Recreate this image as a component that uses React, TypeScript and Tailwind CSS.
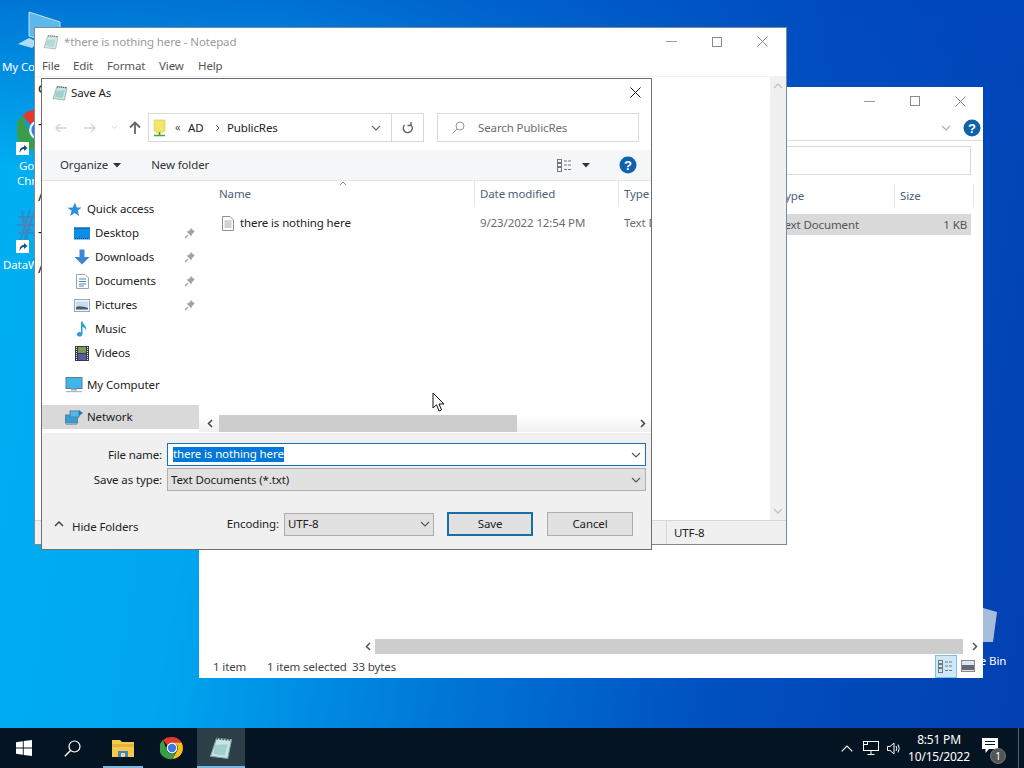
import React from "react";

const Pad = ({ s = 16 }: { s?: number }) => (
  <svg width={s} height={s} viewBox="0 0 16 16">
    <path d="M5 1.5 L15 2.5 L12.5 15 L1 13.5 Z" fill="#c6e6e2" stroke="#7f9f9f" strokeWidth="0.7" />
    <path d="M4 6 L12.5 5.5 L10.5 13 L3 12 Z" fill="#8fc6c4" opacity="0.7" />
    <path d="M5 1.8 L15 2.8" stroke="#556" strokeWidth="1.2" strokeDasharray="1 1" />
  </svg>
);
const Pin = () => (
  <svg width="12" height="12" viewBox="0 0 12 12">
    <path d="M7 1 L11 5 L9.5 5.5 L7.5 8 L7.5 9.5 L2.5 4.5 L4 4.5 L6.5 2.5 Z" fill="#a3a3a3" />
    <path d="M4 8 L1 11" stroke="#a3a3a3" strokeWidth="1.2" />
  </svg>
);
const Help = ({ s = 18 }: { s?: number }) => (
  <svg width={s} height={s} viewBox="0 0 18 18">
    <circle cx="9" cy="9" r="8.5" fill="#0f62ae" />
    <text x="9" y="13.5" textAnchor="middle" fontSize="13" fontWeight="700" fontFamily="Liberation Sans, sans-serif" fill="#fff">?</text>
  </svg>
);
const Chev = ({ c = "#555", w = 10 }: { c?: string; w?: number }) => (
  <svg width={w} height="6" viewBox="0 0 10 6"><path d="M1 1 L5 5 L9 1" fill="none" stroke={c} strokeWidth="1.1" /></svg>
);
const Caret = () => (
  <svg width="8" height="5" viewBox="0 0 8 5"><path d="M0 0 H8 L4 4.5 Z" fill="#333" /></svg>
);
const WinCtl = () => (
  <div className="flex h-full">
    <div className="w-[45px] flex items-center justify-center"><div className="w-[11px] h-px bg-[#9a9a9a] mr-[2px]" /></div>
    <div className="w-[45px] flex items-center justify-center"><div className="w-[10px] h-[10px] border border-[#8a8a8a] mr-[2px]" /></div>
    <div className="w-[45px] flex items-center justify-center">
      <svg width="11" height="11" viewBox="0 0 11 11"><path d="M0.5 0.5 L10.5 10.5 M10.5 0.5 L0.5 10.5" stroke="#8a8a8a" /></svg>
    </div>
  </div>
);
const ViewIcon = () => (
  <svg width="16" height="13" viewBox="0 0 16 13" fill="none" stroke="#777">
    <rect x="0.5" y="0.5" width="4" height="3" /><rect x="0.5" y="4.5" width="4" height="3" /><rect x="0.5" y="8.5" width="4" height="4" />
    <path d="M7 2 H15 M7 6 H15 M7 10.5 H15" strokeDasharray="3 1" />
  </svg>
);

const StarI = () => (
  <svg width="15" height="15" viewBox="0 0 15 15"><path d="M8 0.5 L9.8 5.5 L14.5 5.5 L10.8 8.8 L12.2 14 L7.6 11 L3 14 L4.7 8.8 L0.5 5.8 L5.7 5.5 Z" fill="#2f8fd8" /></svg>
);
const DesktopI = () => (
  <svg width="16" height="13" viewBox="0 0 16 13"><rect x="0" y="0.5" width="16" height="12" fill="#0f8ce6" /><rect x="0" y="0.5" width="16" height="1.5" fill="#0b6bb5" /><path d="M1 11.5 H15" stroke="#0a3d70" strokeDasharray="1 1" /></svg>
);
const DownI = () => (
  <svg width="16" height="16" viewBox="0 0 16 16"><path d="M5.5 0.5 H10.5 V8 H15.5 L8 15.5 L0.5 8 H5.5 Z" fill="#3b87d6" /></svg>
);
const DocsI = () => (
  <svg width="13" height="15" viewBox="0 0 13 15"><path d="M0.5 0.5 H9 L12.5 4 V14.5 H0.5 Z" fill="#fff" stroke="#9aa4ae" /><path d="M3 5 H10 M3 7.5 H10 M3 10 H10 M3 12 H8" stroke="#4a8ab8" /></svg>
);
const PicsI = () => (
  <svg width="16" height="13" viewBox="0 0 16 13"><rect x="0.5" y="0.5" width="15" height="12" fill="#f3f6fa" stroke="#98a6b8" /><rect x="2" y="2.5" width="12" height="8" fill="#c8dcee" /><path d="M2 10.5 L2 8 C6 6.5 10 8 14 9 V10.5 Z" fill="#4a5a68" /></svg>
);
const MusicI = () => (
  <svg width="12" height="16" viewBox="0 0 12 16"><path d="M5 0.5 H6.5 C7 4 11.5 5 10 10 C9.8 7.5 8.5 6.5 6.5 6 V13 C6.5 15 4.5 15.8 2.8 15.5 C0.5 15 0.3 12.5 2 11.6 C3 11 4.2 11 5 11.4 Z" fill="#2a9fdc" /></svg>
);
const VideoI = () => (
  <svg width="14" height="15" viewBox="0 0 14 15"><rect width="14" height="15" fill="#3a3a3a" /><rect x="3" y="1" width="8" height="6" fill="#7a9a5a" /><rect x="3" y="8" width="8" height="6" fill="#4d5fa0" /><path d="M1.5 1 V14 M12.5 1 V14" stroke="#eee" strokeDasharray="1 1" /></svg>
);
const PcI = () => (
  <svg width="18" height="16" viewBox="0 0 18 16"><rect x="1" y="0.5" width="16" height="11" fill="#3fb6ea" stroke="#5a7f96" /><rect x="6" y="11.5" width="6" height="2" fill="#9ab" /><rect x="1" y="14" width="16" height="1.2" fill="#aab7c2" /></svg>
);
const NetI = () => (
  <svg width="18" height="16" viewBox="0 0 18 16"><rect x="0.5" y="6" width="12" height="8" fill="#2f9fdc" stroke="#5a7f96" /><rect x="5" y="2" width="9" height="6" fill="#53b9ea" stroke="#5a7f96" /><path d="M14 1 L18 4 L14 7 Z" fill="#1f7fc0" /><path d="M1 15.4 H12" stroke="#8fa0ad" /></svg>
);

const Side = ({ icon, label, indent, pin, active }: { icon: React.ReactNode; label: string; indent?: boolean; pin?: boolean; active?: boolean }) => (
  <div className={`h-6 flex items-center ${active ? "bg-[#d9d9d9]" : ""}`}>
    <div className={`flex items-center justify-center shrink-0 h-full ${indent ? "ml-[32px] w-[16px]" : "ml-[23px] w-[18px]"}`}>{icon}</div>
    <span className={`${indent ? "ml-[5px]" : "ml-[4px]"} flex-1 text-[#222]`}>{label}</span>
    {pin && <span className="mr-[3px] w-[12px] flex"><Pin /></span>}
    {!pin && <span className="mr-[3px]" />}
  </div>
);

const DeskLabel = ({ children, cls }: { children: React.ReactNode; cls: string }) => (
  <div className={`absolute text-white whitespace-nowrap ${cls}`}>{children}</div>
);
const Shortcut = ({ cls }: { cls: string }) => (
  <svg className={`absolute ${cls}`} width="13" height="13" viewBox="0 0 13 13"><rect width="13" height="13" fill="#fff" /><path d="M3.5 11 C3.5 6.5 5.5 5 8 5 V3 L11.5 6 L8 9 V7 C6 7 5 8.5 3.5 11 Z" fill="#1a4f8f" /></svg>
);

const ChromeI = ({ s = 24 }: { s?: number }) => (
  <svg width={s} height={s} viewBox="0 0 24 24">
    <path d="M12 1 A11 11 0 0 1 21.5 6.5 L12 6.5 A5.5 5.5 0 0 0 7.2 9.2 L3 4 A11 11 0 0 1 12 1 Z" fill="#e5372b" />
    <path d="M21.5 6.5 A11 11 0 0 1 12.5 23 L17 14.8 A5.5 5.5 0 0 0 17 9 L12 6.5 Z" fill="#f9c01b" />
    <path d="M3 4 A11 11 0 0 0 12.5 23 L17 14.8 A5.5 5.5 0 0 1 7.2 14.8 Z" fill="#3b9d47" />
    <circle cx="12" cy="12" r="5.4" fill="#fff" /><circle cx="12" cy="12" r="4.2" fill="#3f78e0" />
  </svg>
);

export default function App() {
  return (
    <div
      className="relative w-[1024px] h-[768px] overflow-hidden text-[11.5px] tracking-[-0.12px] text-[#222] bg-[linear-gradient(to_bottom,rgba(0,70,190,0.55),rgba(0,70,190,0)_22%),linear-gradient(100deg,#00b0f2_0%,#00a6f0_24%,#0078d8_48%,#0050c0_72%,#0340b2_100%)]"
      style={{ fontFamily: '"Noto Sans", sans-serif' }}
    >
      {/* desktop icons */}
      <svg className="absolute left-[18px] top-[10px]" width="44" height="44" viewBox="0 0 44 44">
        <path d="M11 2 L42 12 V36 L11 26 Z" fill="#5fb8ea" stroke="#bfe3f7" />
        <path d="M0 34 L11 28 L20 32 L14 38 Z" fill="#cfeafa" opacity="0.85" />
      </svg>
      <DeskLabel cls="left-[2px] top-[58px]">My Computer</DeskLabel>
      <div className="absolute left-[17px] top-[108px] w-[44px] h-[44px]"><ChromeI s={44} /></div>
      <Shortcut cls="left-[16px] top-[142px]" />
      <DeskLabel cls="left-[19px] top-[157px]">Google</DeskLabel>
      <DeskLabel cls="left-[17px] top-[172px]">Chrome</DeskLabel>
      <svg className="absolute left-[16px] top-[207px] opacity-60" width="20" height="40" viewBox="0 0 20 40">
        <path d="M2 10 H20 M0 18 H20 M2 26 H20 M6 4 L12 36 M14 2 L4 34 M18 6 L8 34" stroke="#5d6f9f" strokeWidth="1.6" />
        <path d="M4 12 L16 24 M16 10 L6 26" stroke="#a85f7f" strokeWidth="1.4" />
      </svg>
      <Shortcut cls="left-[16px] top-[240px]" />
      <DeskLabel cls="left-[3px] top-[256px]">DataWedge</DeskLabel>

      <svg className="absolute left-[983px] top-[606px]" width="14" height="40" viewBox="0 0 14 40">
        <path d="M0 2 L14 6 L10 36 H0 Z" fill="#b9cbdc" opacity="0.9" />
      </svg>
      <DeskLabel cls="left-[947px] top-[652px]">Recycle Bin</DeskLabel>

      {/* Explorer window */}
      <div className="absolute left-[199px] top-[87px] w-[784px] h-[591px] bg-white flex flex-col text-[#555]">
        <div className="h-[28px] flex justify-end shrink-0"><WinCtl /></div>
        <div className="h-[26px] flex items-center justify-end border-b border-[#dcdcdc] shrink-0">
          <span className="mr-[12px] flex"><Chev c="#aaa" /></span>
          <span className="mr-[2px] flex"><Help /></span>
        </div>
        <div className="h-[29px] mt-[5px] ml-[12px] mr-[12px] border border-[#d9d9d9] shrink-0" />
        <div className="h-[23px] mt-[9px] flex shrink-0 text-[#4c607a]">
          <span className="w-[580px]" />
          <span className="w-[115px] leading-[23px]">Type</span>
          <span className="w-[80px] border-l border-[#e5e5e5] pl-[5px] border-r leading-[23px]">Size</span>
        </div>
        <div className="h-[21px] mt-[7px] ml-[12px] mr-[12px] bg-[#d9d9d9] flex items-center shrink-0 text-[#555]">
          <span className="w-[568px]" />
          <span className="flex-1">Text Document</span>
          <span className="mr-[4px]">1 KB</span>
        </div>
        <div className="flex-1" />
        <div className="h-[15px] flex items-center shrink-0">
          <span className="w-[166px]" />
          <svg className="mr-[4px]" width="6" height="9" viewBox="0 0 6 9"><path d="M5 1 L1.5 4.5 L5 8" fill="none" stroke="#555" strokeWidth="1.5" /></svg>
          <div className="w-[588px] h-full bg-[#cdcdcd]" />
          <svg className="ml-[9px]" width="6" height="9" viewBox="0 0 6 9"><path d="M1 1 L4.5 4.5 L1 8" fill="none" stroke="#555" strokeWidth="1.5" /></svg>
        </div>
        <div className="h-[24px] flex items-center shrink-0 text-[#444] whitespace-nowrap">
          <span className="ml-[14px] w-[54px] shrink-0 pt-[1px]">1 item</span>
          <span className="w-[85px] shrink-0 pt-[1px]">1 item selected</span>
          <span className="flex-1 pt-[1px]">33 bytes</span>
          <div className="w-[22px] h-[23px] bg-[#cde8f8] border border-[#7fc0e4] flex items-center justify-center"><ViewIcon /></div>
          <div className="w-[14px] h-[12px] ml-[4px] mr-[8px] border border-[#888] bg-[#dce8f0]"><div className="mt-[4px] h-[5px] bg-[#667]" /></div>
        </div>
      </div>

      {/* Notepad window */}
      <div className="absolute left-[34px] top-[27px] w-[753px] h-[518px] bg-white border border-[#7a8a96] flex flex-col">
        <div className="h-[27px] flex items-center shrink-0">
          <span className="ml-[8px] flex opacity-80"><Pad /></span>
          <span className="ml-[5px] flex-1 text-[#9b9b9b]">*there is nothing here - Notepad</span>
          <span className="mr-[1px] h-full"><WinCtl /></span>
        </div>
        <div className="h-[21px] flex items-center shrink-0 text-[#555]">
          <span className="ml-[7px] w-[31px]">File</span>
          <span className="w-[34px]">Edit</span>
          <span className="w-[52px]">Format</span>
          <span className="w-[39px]">View</span>
          <span>Help</span>
        </div>
        <div className="flex-1 flex min-h-0 border-t border-[#f0f0f0]">
          <div className="flex-1 flex flex-col pl-[3px] text-[14px] leading-[36px] text-[#111] overflow-hidden">
            <span className="-mt-[7px]">c</span><span>-</span><span className="invisible">x</span><span>/</span><span>-</span><span>/</span>
          </div>
          <div className="w-[16px] bg-[#f0f0f0] flex flex-col items-center justify-between py-[6px]">
            <svg width="10" height="6" viewBox="0 0 10 6"><path d="M1 5 L5 1 L9 5" fill="none" stroke="#c4c4c4" strokeWidth="1.4" /></svg>
            <svg width="10" height="6" viewBox="0 0 10 6"><path d="M1 1 L5 5 L9 1" fill="none" stroke="#c4c4c4" strokeWidth="1.4" /></svg>
          </div>
        </div>
        <div className="h-[24px] bg-[#f0f0f0] border-t border-[#d7d7d7] flex items-center shrink-0">
          <span className="w-[631px]" />
          <span className="h-full border-l border-[#d7d7d7] pl-[7px] leading-[23px] text-[#222]">UTF-8</span>
        </div>
      </div>

      {/* Save As dialog */}
      <div className="absolute left-[41px] top-[78px] w-[611px] h-[472px] bg-white border border-[#6f6f6f] flex flex-col">
        <div className="h-[27px] flex items-center shrink-0">
          <span className="ml-[10px] flex"><Pad /></span>
          <span className="ml-[3px] flex-1 text-[#222]">Save As</span>
          <svg className="mr-[10px]" width="11" height="11" viewBox="0 0 11 11"><path d="M0.5 0.5 L10.5 10.5 M10.5 0.5 L0.5 10.5" stroke="#111" /></svg>
        </div>
        {/* nav row */}
        <div className="h-[44px] flex items-start shrink-0">
          <div className="mt-[7px] h-[29px] flex items-center w-[106px] shrink-0">
            <svg className="ml-[13px]" width="12" height="10" viewBox="0 0 12 10"><path d="M12 5 H1 M5 1 L1 5 L5 9" fill="none" stroke="#d4d4d4" strokeWidth="1.5" /></svg>
            <svg className="ml-[17px]" width="12" height="10" viewBox="0 0 12 10"><path d="M0 5 H11 M7 1 L11 5 L7 9" fill="none" stroke="#d4d4d4" strokeWidth="1.5" /></svg>
            <svg className="ml-[15px]" width="7" height="5" viewBox="0 0 7 5"><path d="M1 1 L3.5 3.5 L6 1" fill="none" stroke="#d8d8d8" /></svg>
            <svg className="ml-[11px]" width="12" height="13" viewBox="0 0 12 13"><path d="M6 13 V1.5 M1 6.5 L6 1.5 L11 6.5" fill="none" stroke="#666" strokeWidth="1.8" /></svg>
          </div>
          <div className="mt-[7px] h-[29px] w-[276px] border border-[#d9d9d9] flex items-center shrink-0">
            <svg className="ml-[4px]" width="13" height="18" viewBox="0 0 13 18"><path d="M1 1 H12 V12 L8 14 H5 L1 12 Z" fill="#f1e56a" stroke="#d9c94a" strokeWidth="0.6" /><path d="M1 16.5 H12 M6.5 13 V16" stroke="#4da436" strokeWidth="1.6" /></svg>
            <span className="ml-[9px] text-[#555] w-[13px] text-[11px]">«</span>
            <span className="w-[27px]">AD</span>
            <svg width="5" height="8" viewBox="0 0 5 8"><path d="M1 1 L4 4 L1 7" fill="none" stroke="#666" /></svg>
            <span className="ml-[7px] flex-1">PublicRes</span>
            <span className="mr-[10px] flex"><Chev c="#666" /></span>
            <div className="w-[1px] h-full bg-[#d9d9d9]" />
            <div className="w-[31px] flex justify-center">
              <svg width="11" height="12" viewBox="0 0 11 12"><path d="M8.5 3 A4.5 4.5 0 1 1 3 2.2 M2 0 V3.5 H5.5" fill="none" stroke="#666" strokeWidth="1.4" transform="scale(-1 1) translate(-11 0)" /></svg>
            </div>
          </div>
          <div className="mt-[7px] ml-[13px] h-[29px] w-[202px] border border-[#d9d9d9] flex items-center text-[#6d6d6d] shrink-0">
            <svg className="ml-[14px]" width="13" height="13" viewBox="0 0 13 13"><circle cx="8" cy="5" r="4" fill="none" stroke="#999" /><path d="M5 8 L0.5 12.5" stroke="#999" /></svg>
            <span className="ml-[13px]">Search PublicRes</span>
          </div>
        </div>
        {/* toolbar */}
        <div className="h-[31px] bg-[#f5f6f7] border-b border-[#e6e6e6] flex items-center shrink-0 text-[#333]">
          <span className="ml-[18px]">Organize</span>
          <span className="ml-[5px] flex"><Caret /></span>
          <span className="ml-[30px] flex-1">New folder</span>
          <ViewIcon />
          <span className="ml-[9px] flex"><Caret /></span>
          <span className="ml-[29px] mr-[14px] flex"><Help /></span>
        </div>
        {/* body */}
        <div className="h-[252px] flex shrink-0">
          <div className="w-[157px] pt-[16px] flex flex-col shrink-0">
            <Side icon={<StarI />} label="Quick access" />
            <Side indent pin icon={<DesktopI />} label="Desktop" />
            <Side indent pin icon={<DownI />} label="Downloads" />
            <Side indent pin icon={<DocsI />} label="Documents" />
            <Side indent pin icon={<PicsI />} label="Pictures" />
            <Side indent icon={<MusicI />} label="Music" />
            <Side indent icon={<VideoI />} label="Videos" />
            <div className="h-2" />
            <Side icon={<PcI />} label="My Computer" />
            <div className="h-2" />
            <Side active icon={<NetI />} label="Network" />
          </div>
          <div className="flex-1 min-w-0 flex flex-col overflow-hidden">
            <div className="h-[26px] flex shrink-0 text-[#4c607a] whitespace-nowrap relative">
              <span className="w-[275px] shrink-0 pl-[20px] leading-[26px]">Name</span>
              <span className="w-[144px] shrink-0 border-l border-[#e5e5e5] pl-[5px] leading-[26px]">Date modified</span>
              <span className="shrink-0 border-l border-[#e5e5e5] pl-[5px] leading-[26px]">Type</span>
              <svg className="absolute left-[140px] top-0" width="8" height="5" viewBox="0 0 8 5"><path d="M1 4 L4 1 L7 4" fill="none" stroke="#888" /></svg>
            </div>
            <div className="h-[28px] mt-[2px] flex items-center whitespace-nowrap shrink-0 text-[#6d6d6d]">
              <svg className="ml-[23px] shrink-0" width="12" height="15" viewBox="0 0 12 15"><path d="M0.5 0.5 H8 L11.5 4 V14.5 H0.5 Z" fill="#fff" stroke="#8f8f8f" /><path d="M2.5 5 H9.5 M2.5 7 H9.5 M2.5 9 H9.5 M2.5 11 H9.5" stroke="#a5a5a5" /></svg>
              <span className="ml-[6px] w-[240px] shrink-0 text-[#222]">there is nothing here</span>
              <span className="w-[144px] shrink-0">9/23/2022 12:54 PM</span>
              <span className="shrink-0">Text Document</span>
            </div>
            <div className="flex-1" />
            <div className="h-[17px] mb-[1px] flex items-center shrink-0 bg-gradient-to-b from-white to-[#f0f0f0]">
              <svg className="ml-[8px] mr-[6px]" width="6" height="9" viewBox="0 0 6 9"><path d="M5 1 L1.5 4.5 L5 8" fill="none" stroke="#444" strokeWidth="1.5" /></svg>
              <div className="w-[298px] h-full bg-[#cdcdcd]" />
              <div className="flex-1" />
              <svg className="mr-[5px]" width="6" height="9" viewBox="0 0 6 9"><path d="M1 1 L4.5 4.5 L1 8" fill="none" stroke="#444" strokeWidth="1.5" /></svg>
            </div>
          </div>
        </div>
        {/* form */}
        <div className="flex-1 bg-[#f0f0f0] flex flex-col min-h-0">
          <div className="h-[23px] mt-[10px] flex items-center shrink-0">
            <span className="w-[120px] text-right text-[#222]">File name:</span>
            <div className="ml-[5px] w-[479px] h-full bg-white border border-[#0f74b8] flex items-center">
              <span className="ml-[5px] bg-[#0078d7] text-white h-[15px] leading-[14px] flex-none">there is nothing here</span>
              <span className="flex-1" />
              <span className="mr-[4px] flex"><Chev c="#555" /></span>
            </div>
          </div>
          <div className="h-[23px] mt-[2px] flex items-center shrink-0">
            <span className="w-[120px] text-right text-[#222]">Save as type:</span>
            <div className="ml-[5px] w-[479px] h-full bg-[#e1e1e1] border border-[#b0b0b0] flex items-center">
              <span className="ml-[3px] flex-1 text-[#222]">Text Documents (*.txt)</span>
              <span className="mr-[4px] flex"><Chev c="#555" /></span>
            </div>
          </div>
          <div className="h-[24px] mt-[21px] flex items-center shrink-0">
            <svg className="ml-[12px]" width="10" height="6" viewBox="0 0 10 6"><path d="M1 5 L5 1 L9 5" fill="none" stroke="#444" strokeWidth="1.5" /></svg>
            <span className="ml-[8px] w-[148px] mt-[5px] text-[#222]">Hide Folders</span>
            <span className="w-[59px] text-right text-[#222]">Encoding:</span>
            <div className="ml-[5px] w-[150px] h-[23px] bg-[#e1e1e1] border border-[#adadad] flex items-center">
              <span className="ml-[3px] flex-1 text-[#222]">UTF-8</span>
              <span className="mr-[3px] flex"><Chev c="#555" /></span>
            </div>
            <div className="ml-[13px] w-[86px] h-[24px] bg-[#e1e1e1] border-2 border-[#1c6ea8] flex items-center justify-center text-[#222]">Save</div>
            <div className="ml-[14px] w-[86px] h-[24px] bg-[#e1e1e1] border border-[#adadad] flex items-center justify-center text-[#222]">Cancel</div>
          </div>
        </div>
      </div>

      {/* cursor */}
      <svg className="absolute left-[432px] top-[392px]" width="14" height="21" viewBox="0 0 14 21">
        <path d="M1 1 V16 L4.5 12.8 L7 19 L9.5 18 L7 12 H12 Z" fill="#fff" stroke="#111" strokeWidth="1" />
      </svg>

      {/* taskbar */}
      <div className="absolute left-0 bottom-0 w-full h-[40px] bg-[#051423] flex items-center text-white text-[12px]">
        <div className="w-[48px] flex justify-center">
          <svg width="16" height="16" viewBox="0 0 16 16"><path d="M0 2.2 L6.8 1.2 V7.5 H0 Z M7.7 1.1 L16 0 V7.5 H7.7 Z M0 8.4 H6.8 V14.8 L0 13.8 Z M7.7 8.4 H16 V16 L7.7 14.9 Z" fill="#fff" /></svg>
        </div>
        <div className="w-[48px] flex justify-center">
          <svg width="17" height="17" viewBox="0 0 17 17"><circle cx="10.5" cy="6.5" r="5.5" fill="none" stroke="#fff" strokeWidth="1.2" /><path d="M6.5 10.5 L0.8 16.2" stroke="#fff" strokeWidth="1.4" /></svg>
        </div>
        <div className="ml-[3px] w-[48px] h-full relative flex items-center justify-center">
          <svg width="22" height="19" viewBox="0 0 22 19"><path d="M0 1 H8 L10 3 H22 V18 H0 Z" fill="#f3c94e" /><rect x="0" y="5" width="22" height="3" fill="#e4b43a" /><rect x="6" y="12" width="10" height="6" fill="#3e87c0" /><rect x="9" y="14" width="4" height="4" fill="#f3d77e" /></svg>
          <div className="absolute bottom-0 left-[4px] w-[40px] h-[2px] bg-[#79b6e0]" />
        </div>
        <div className="w-[50px] h-full flex items-center justify-center"><ChromeI s={24} /></div>
        <div className="w-[48px] h-full relative flex items-center justify-center bg-[#2c3e48]">
          <Pad s={24} />
          <div className="absolute bottom-0 left-0 w-full h-[2px] bg-[#79b6e0]" />
        </div>
        <div className="flex-1" />
        <svg className="mr-[10px]" width="12" height="7" viewBox="0 0 12 7"><path d="M0.7 6.3 L6 1 L11.3 6.3" fill="none" stroke="#fff" strokeWidth="1.1" /></svg>
        <svg className="mr-[8px]" width="16" height="14" viewBox="0 0 16 14" fill="none" stroke="#fff"><rect x="0.5" y="0.5" width="15" height="9" /><rect x="0.5" y="0.5" width="4" height="3" fill="#051423" /><path d="M8 9.5 V13 M4.5 13.5 H11.5" /></svg>
        <svg className="mr-[6px]" width="15" height="13" viewBox="0 0 15 13" fill="none" stroke="#fff"><path d="M0.5 4.5 H3 L7 1 V12 L3 8.5 H0.5 Z" /><path d="M9 4 Q10.5 6.5 9 9 M11 2.5 Q13.5 6.5 11 10.5" /></svg>
        <div className="w-[62px] text-center leading-[17px] whitespace-nowrap tracking-[-0.2px]">
          <div>8:51 PM</div>
          <div>10/15/2022</div>
        </div>
        <div className="w-[48px] h-full relative flex items-center justify-center">
          <svg className="-mt-[5px] -ml-[8px]" width="16" height="16" viewBox="0 0 16 16"><path d="M0 0 H16 V11 H7 L3.5 15 V11 H0 Z" fill="#fff" /><path d="M3 3.5 H13 M3 6.5 H13" stroke="#051423" /></svg>
          <div className="absolute left-[20px] top-[20px] w-[16px] h-[16px] rounded-full bg-[#555] border border-[#777] flex items-center justify-center text-[10px] leading-none">1</div>
        </div>
        <div className="w-[6px] h-full border-l border-[#55606a]" />
      </div>
    </div>
  );
}
